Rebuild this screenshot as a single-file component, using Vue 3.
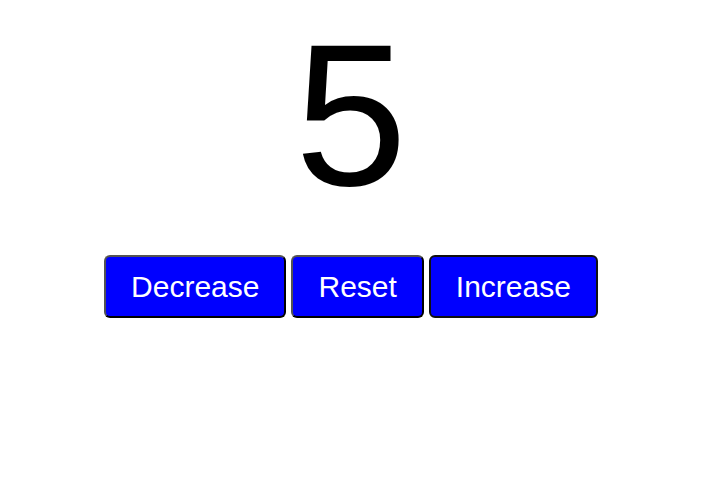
<script setup>
import { ref } from 'vue'

const count = ref(5)
</script>

<template>
  <main class="counter">
    <output class="count">{{ count }}</output>
    <div class="actions">
      <button type="button" class="action" @click="count--">Decrease</button>
      <button type="button" class="action" @click="count = 0">Reset</button>
      <button type="button" class="action action-current" @click="count++">Increase</button>
    </div>
  </main>
</template>

<style>
body {
  margin: 0;
  background: #fff;
}
</style>

<style scoped>
.counter {
  display: flex;
  flex-direction: column;
  align-items: center;
  gap: 25px;
  padding-right: 3px;
  font-family: "Liberation Sans", Arial, Helvetica, sans-serif;
}

.count {
  color: #000;
  font-size: 202px;
  line-height: 230px;
}

.actions {
  display: flex;
  gap: 5px;
}

.action {
  padding: 12px 25px;
  border: 2px outset #000;
  border-radius: 6px;
  background: #00f;
  color: #fff;
  font-family: inherit;
  font-size: 30px;
  line-height: 35px;
  cursor: pointer;
}

.action-current {
  border: 2px solid #101010;
}
</style>
